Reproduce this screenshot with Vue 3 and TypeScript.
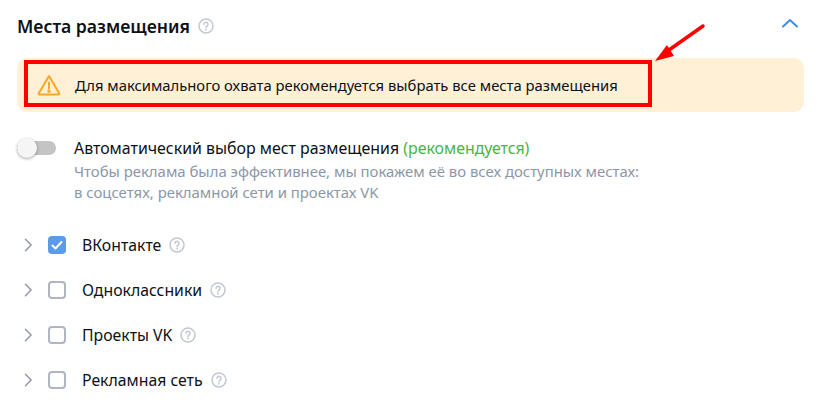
<template>
  <div class="page">
    <div class="header">
      <h2>Места размещения</h2>
      <svg class="help" viewBox="0 0 16 16"><circle cx="8" cy="8" r="7"/><path d="M6 6.300a2 2 0 1 1 3.200 1.600C8.400 8.500 8 8.900 8 9.800"/><circle class="dot" cx="8" cy="11.700" r=".9"/></svg>
      <svg class="collapse" viewBox="0 0 16 10"><path d="M1 8.500 8 2l7 6.500"/></svg>
    </div>

    <div class="banner">
      <svg class="warn" viewBox="0 0 24 22"><path d="M12 2 1.700 19.500a.6.6 0 0 0 .5.9h19.600a.6.6 0 0 0 .5-.9L12 2Z"/><path d="M12 8.500v6"/><circle cx="12" cy="17.300" r=".7"/></svg>
      <span>Для максимального охвата рекомендуется выбрать все места размещения</span>
      <div class="mark"></div>
      <svg class="arrow" viewBox="0 0 60 44"><path class="shaft" d="M50 3 16 27"/><path class="head" d="M2 38 14 22l7 11Z"/></svg>
    </div>

    <div class="auto">
      <div class="switch"><div class="knob"></div></div>
      <div class="auto-text">
        <div class="auto-title">Автоматический выбор мест размещения <span class="green">(рекомендуется)</span></div>
        <div class="auto-hint">Чтобы реклама была эффективнее, мы покажем её во всех доступных местах:<br>в соцсетях, рекламной сети и проектах VK</div>
      </div>
    </div>

    <ul class="list">
      <li v-for="item in items" :key="item.name" class="row">
        <svg class="chevron" viewBox="0 0 10 16"><path d="M1.500 1.500 8 8l-6.500 6.500"/></svg>
        <span class="box" :class="{ checked: item.checked }">
          <svg v-if="item.checked" viewBox="0 0 18 18"><path d="m4.500 9.500 3 3 6-6.500"/></svg>
        </span>
        <span class="name">{{ item.name }}</span>
        <svg class="help" viewBox="0 0 16 16"><circle cx="8" cy="8" r="7"/><path d="M6 6.300a2 2 0 1 1 3.200 1.600C8.400 8.500 8 8.900 8 9.800"/><circle class="dot" cx="8" cy="11.700" r=".9"/></svg>
      </li>
    </ul>
  </div>
</template>

<script setup lang="ts">
interface Placement {
  name: string
  checked: boolean
}

const items: Placement[] = [
  { name: 'ВКонтакте', checked: true },
  { name: 'Одноклассники', checked: false },
  { name: 'Проекты VK', checked: false },
  { name: 'Рекламная сеть', checked: false }
]
</script>

<style>
html, body {
  background: #fff;
}
</style>

<style scoped>
.page {
  width: 824px;
  height: 409px;
  box-sizing: border-box;
  padding: 14px 20px 0 17px;
  overflow: hidden;
  font-family: "Noto Sans", "Open Sans", sans-serif;
  color: #0c1116;
}

.header {
  display: flex;
  align-items: center;
  height: 24px;
}

.header h2 {
  margin: 0;
  font-size: 17.600px;
  font-weight: 600;
}

.help {
  flex-shrink: 0;
  width: 16px;
  height: 16px;
  margin-left: 8px;
  fill: none;
  stroke: #c2c9d3;
  stroke-width: 1.500;
  stroke-linecap: round;
}

.help .dot {
  fill: #c2c9d3;
  stroke: none;
}

.collapse {
  width: 16px;
  height: 10px;
  margin-left: auto;
  margin-right: 6px;
  margin-top: -6px;
  fill: none;
  stroke: #3a8cf0;
  stroke-width: 2;
  stroke-linecap: round;
}

.banner {
  position: relative;
  display: flex;
  align-items: center;
  height: 54px;
  margin-top: 20px;
  padding: 0 20px;
  background: #fff0d6;
  border-radius: 10px;
  font-size: 14.800px;
}

.warn {
  width: 24px;
  height: 22px;
  margin-right: 14px;
  fill: none;
  stroke: #f9a825;
  stroke-width: 2;
  stroke-linecap: round;
  stroke-linejoin: round;
}

.mark {
  position: absolute;
  left: 7px;
  top: 2px;
  width: 628px;
  height: 47px;
  box-sizing: border-box;
  border: 4px solid #fe0000;
}

.arrow {
  position: absolute;
  left: 636px;
  top: -35px;
  width: 60px;
  height: 44px;
}

.arrow .shaft {
  fill: none;
  stroke: #fe0000;
  stroke-width: 3.500;
  stroke-linecap: round;
}

.arrow .head {
  fill: #fe0000;
}

.auto {
  display: flex;
  margin-top: 25px;
}

.switch {
  position: relative;
  width: 39px;
  height: 14px;
  margin-top: 4px;
  border-radius: 7px;
  background: #c4c4c4;
}

.knob {
  position: absolute;
  left: 0;
  top: -3px;
  width: 20px;
  height: 20px;
  border-radius: 50%;
  background: #f5f5f5;
  box-shadow: 0 1px 3px rgba(0, 0, 0, 0.35);
}

.auto-text {
  margin-left: 18px;
}

.auto-title {
  font-size: 15.900px;
  line-height: 22px;
}

.green {
  color: #4bb34b;
}

.auto-hint {
  margin-top: 2px;
  font-size: 14.900px;
  line-height: 21px;
  color: #8b97a6;
}

.list {
  list-style: none;
  margin: 19px 0 0;
  padding: 0;
}

.row {
  display: flex;
  align-items: center;
  height: 45px;
  padding-left: 7px;
}

.chevron {
  width: 9px;
  height: 14px;
  fill: none;
  stroke: #8d96a2;
  stroke-width: 1.600;
  stroke-linecap: round;
  stroke-linejoin: round;
}

.box {
  display: flex;
  width: 18px;
  height: 18px;
  margin-left: 15px;
  box-sizing: border-box;
  border: 2px solid #aeb6c1;
  border-radius: 4px;
}

.box.checked {
  border: none;
  background: #5b9be9;
}

.box svg {
  width: 18px;
  height: 18px;
  fill: none;
  stroke: #fff;
  stroke-width: 2;
  stroke-linecap: round;
  stroke-linejoin: round;
}

.name {
  margin-left: 16px;
  font-size: 15.800px;
}
</style>
